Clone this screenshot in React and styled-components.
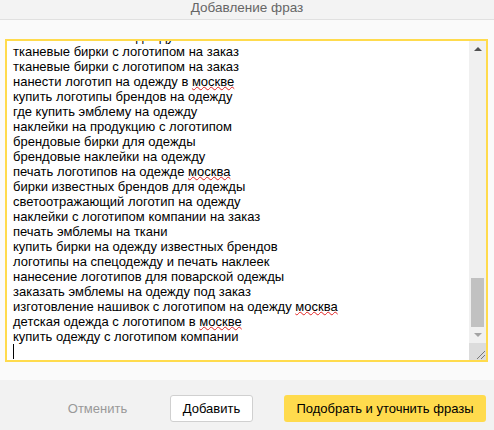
import { useEffect, useRef } from "react"
import styled, { createGlobalStyle } from "styled-components"

const GlobalStyle = createGlobalStyle`
    html, body {
        margin: 0;
        padding: 0;
        background: #fafafa;
    }
    body {
        font-family: "Liberation Sans", Arial, sans-serif;
    }
`

const Dialog = styled.div`
    width: 494px;
    height: 430px;
    display: flex;
    flex-direction: column;
    background: #fafafa;
    overflow: hidden;
`

const Header = styled.div`
    height: 19px;
    flex-shrink: 0;
    display: flex;
    justify-content: center;
    background: #f3f3f3;
    border-bottom: 1px solid #e0e0e0;
    color: #666;
    font-size: 13.5px;
    line-height: 15px;
`

const Body = styled.div`
    flex: 1;
    padding: 19px 6px 18px 5px;
    display: flex;
`

const Field = styled.div`
    flex: 1;
    height: 323px;
    box-sizing: border-box;
    border: 2px solid #ffdb4d;
    background: #fff;
    display: flex;
`

const Editor = styled.div`
    flex: 1;
    box-sizing: border-box;
    padding: 0 2px 1px 6px;
    font-family: "Liberation Sans", Arial, sans-serif;
    font-size: 13px;
    line-height: 15px;
    color: #000;
    outline: none;
    overflow: hidden;
    white-space: pre-wrap;
`

const Line = styled.div`
    min-height: 15px;
`

const Misspelled = styled.span`
    text-decoration: underline wavy #e02020;
    text-decoration-thickness: 1px;
    text-underline-offset: 0px;
    text-decoration-skip-ink: none;
`

const Caret = styled.span`
    display: inline-block;
    width: 1px;
    height: 15px;
    vertical-align: top;
    background: #000;
`

const ScrollBar = styled.div`
    width: 17px;
    flex-shrink: 0;
    display: flex;
    flex-direction: column;
    background: #f0f0f0;
`

const ScrollButton = styled.div`
    height: 16px;
    flex-shrink: 0;
    display: flex;
    align-items: center;
    justify-content: center;

    &::before {
        content: "";
        width: 0;
        height: 0;
        border-left: 4px solid transparent;
        border-right: 4px solid transparent;
        ${(p) =>
            p.$dir === "up"
                ? `border-bottom: 4px solid ${p.$color};`
                : `border-top: 4px solid ${p.$color};`}
    }
`

const Track = styled.div`
    flex: 1;
    display: flex;
    flex-direction: column;
    justify-content: flex-end;
    padding: 0 2px;
`

const Thumb = styled.div`
    height: 49px;
    background: #c1c1c1;
`

const Resizer = styled.div`
    height: 17px;
    flex-shrink: 0;
    background: #dcdcdc;
    display: flex;
    align-items: flex-end;
    justify-content: flex-end;
`

const Footer = styled.div`
    height: 50px;
    flex-shrink: 0;
    box-sizing: border-box;
    display: flex;
    align-items: flex-start;
    justify-content: flex-end;
    gap: 31px;
    padding: 15px 8px 0 0;
    background: #f2f2f2;
`

const Button = styled.button`
    width: ${(p) => p.$width}px;
    height: 27px;
    box-sizing: border-box;
    padding: 0;
    border-radius: 3px;
    font-family: "Liberation Sans", Arial, sans-serif;
    font-size: 13px;
    text-align: center;
    white-space: nowrap;
    cursor: pointer;
    color: ${(p) => (p.$variant === "ghost" ? "#999" : "#000")};
    background: ${(p) =>
        p.$variant === "action" ? "#ffdb4d" : p.$variant === "ghost" ? "transparent" : "#fff"};
    border: 1px solid
        ${(p) => (p.$variant === "default" ? "#d0d0d0" : "transparent")};
`

const phrases = [
    "нанесение лого на одежду",
    "тканевые бирки с логотипом на заказ",
    "тканевые бирки с логотипом на заказ",
    "нанести логотип на одежду в москве",
    "купить логотипы брендов на одежду",
    "где купить эмблему на одежду",
    "наклейки на продукцию с логотипом",
    "брендовые бирки для одежды",
    "брендовые наклейки на одежду",
    "печать логотипов на одежде москва",
    "бирки известных брендов для одежды",
    "светоотражающий логотип на одежду",
    "наклейки с логотипом компании на заказ",
    "печать эмблемы на ткани",
    "купить бирки на одежду известных брендов",
    "логотипы на спецодежду и печать наклеек",
    "нанесение логотипов для поварской одежды",
    "заказать эмблемы на одежду под заказ",
    "изготовление нашивок с логотипом на одежду москва",
    "детская одежда с логотипом в москве",
    "купить одежду с логотипом компании",
]

const typos = ["москве", "москва"]

function renderPhrase(text) {
    return text.split(/(москве|москва)/).map((part, i) =>
        typos.includes(part) ? <Misspelled key={i}>{part}</Misspelled> : part
    )
}

function App() {
    const editorRef = useRef(null)

    useEffect(() => {
        const el = editorRef.current
        if (el) {
            el.scrollTop = el.scrollHeight
        }
    }, [])

    return (
        <Dialog>
            <GlobalStyle />
            <Header>Добавление фраз</Header>
            <Body>
                <Field>
                    <Editor
                        ref={editorRef}
                        contentEditable
                        suppressContentEditableWarning
                        spellCheck={false}
                    >
                        {phrases.map((p, i) => (
                            <Line key={i}>{renderPhrase(p)}</Line>
                        ))}
                        <Line>
                            <Caret />
                        </Line>
                    </Editor>
                    <ScrollBar>
                        <ScrollButton $dir="up" $color="#505050" />
                        <Track>
                            <Thumb />
                        </Track>
                        <ScrollButton $dir="down" $color="#a3a3a3" />
                        <Resizer>
                            <svg width="13" height="13" viewBox="0 0 13 13">
                                <path d="M12 4 L4 12 M12 8 L8 12" stroke="#777" strokeWidth="1" />
                            </svg>
                        </Resizer>
                    </ScrollBar>
                </Field>
            </Body>
            <Footer>
                <Button $variant="ghost" $width={83}>Отменить</Button>
                <Button $variant="default" $width={83}>Добавить</Button>
                <Button $variant="action" $width={202}>Подобрать и уточнить фразы</Button>
            </Footer>
        </Dialog>
    )
}

export default App
